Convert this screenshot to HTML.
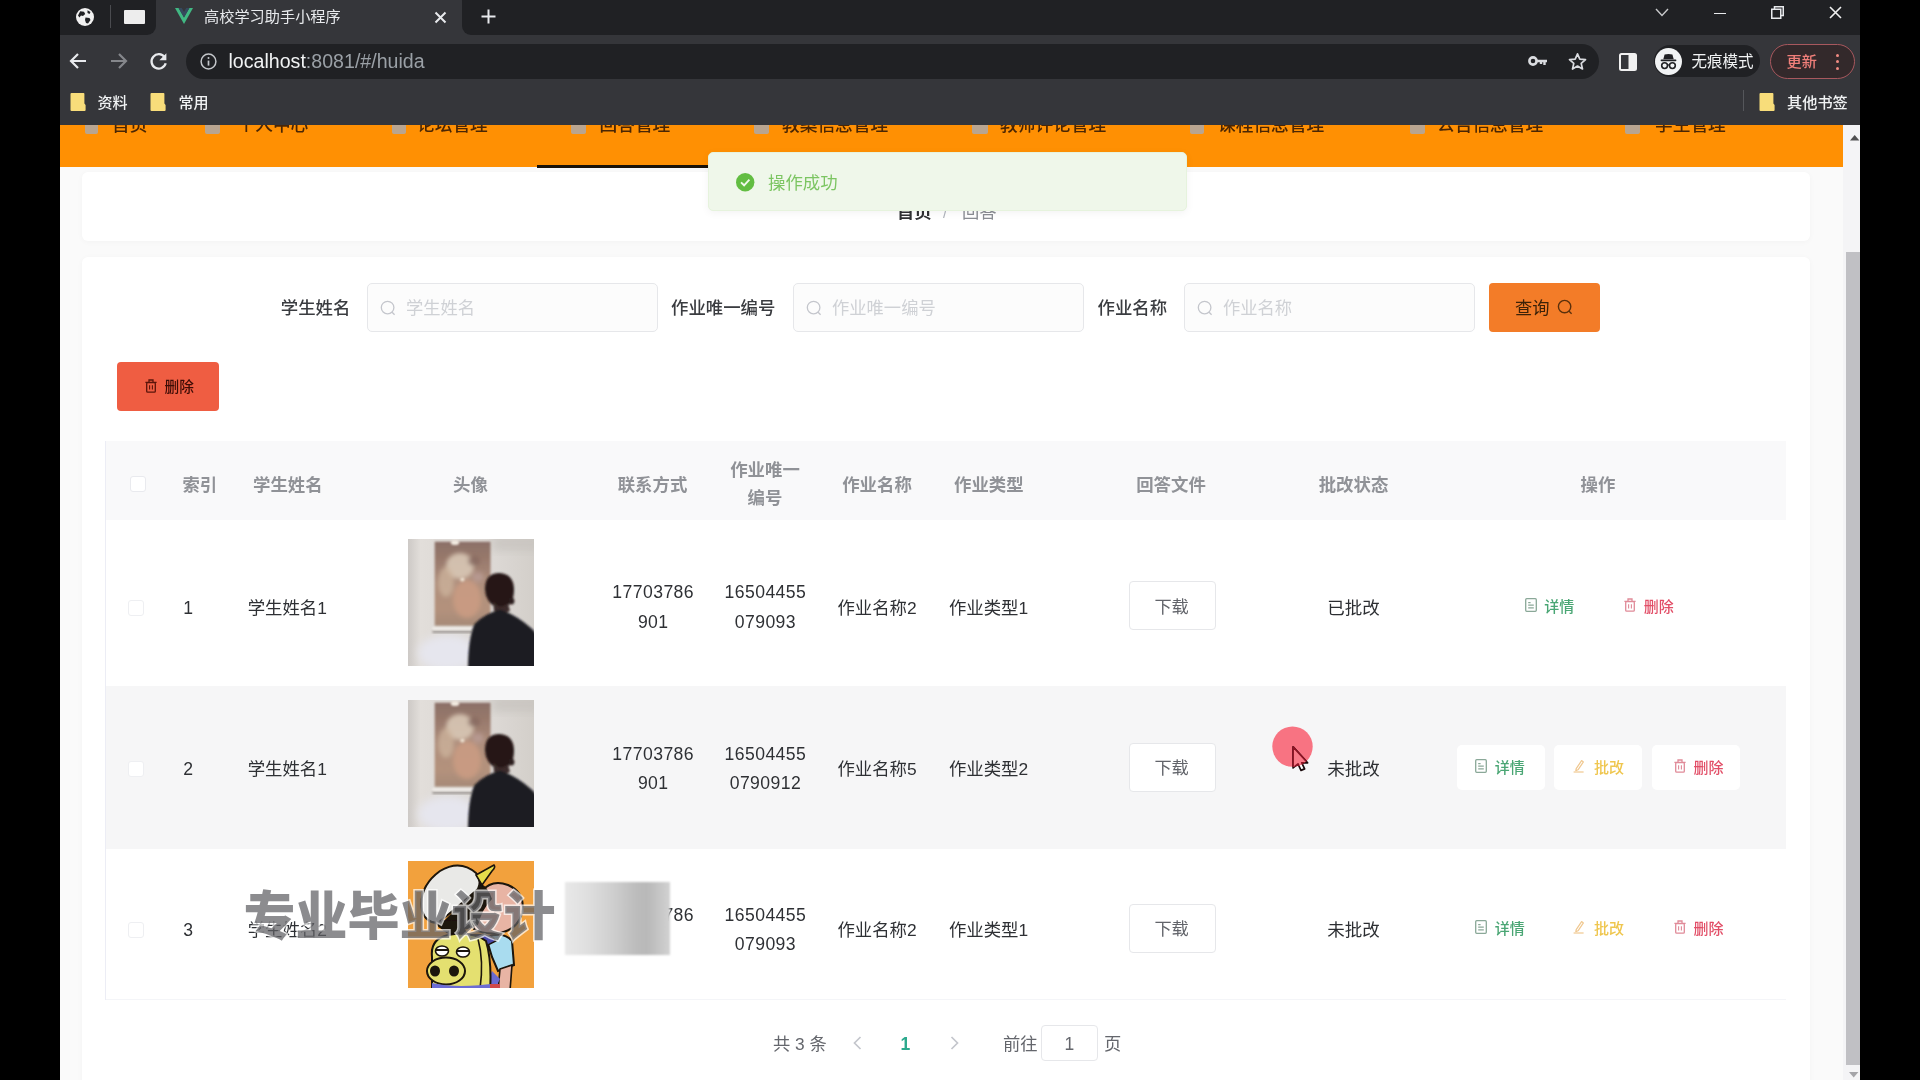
<!DOCTYPE html>
<html lang="zh-CN">
<head>
<meta charset="utf-8">
<title>高校学习助手小程序</title>
<style>
*{box-sizing:border-box;margin:0;padding:0}
html,body{width:1920px;height:1080px;overflow:hidden;background:#000}
body{font-family:"Liberation Sans","Noto Sans CJK SC",sans-serif;font-size:17.5px;color:#303133;position:relative}
#stage{position:absolute;left:60px;top:0;width:1800px;height:1080px;background:#fafafa;overflow:hidden}
.t{position:absolute;white-space:nowrap;line-height:1}
svg{overflow:visible}
#fx{position:absolute;left:-30px;top:-30px;width:1860px;height:1140px;background:#fafafa;filter:blur(.6px)}
#in{position:absolute;left:30px;top:30px;width:1800px;height:1080px}

</style>
</head>
<body>
<div id="stage">
<div id="fx">
<div id="in">
<div id="page" style="position:absolute;left:-30px;top:125px;width:1860px;height:985px;overflow:hidden">
<div style="position:absolute;left:30px;top:-125px;width:1800px;height:1080px">
<div style="position:absolute;left:22.0px;top:171.5px;width:1728.0px;height:69.0px;background:#fff;border-radius:6px;box-shadow:0 1px 6px rgba(0,0,0,.03);"></div>
<div style="position:absolute;left:22.0px;top:257.0px;width:1728.0px;height:900.0px;background:#fff;border-radius:6px;box-shadow:0 1px 6px rgba(0,0,0,.03);"></div>
<span class="t" style="left:837.0px;top:213.3px;font-size:17.3px;color:#303133;transform:translate(0,-50%);font-weight:700;">首页</span>
<span class="t" style="left:885.0px;top:212.1px;font-size:15px;color:#b0b4bc;transform:translate(-50%,-50%);">/</span>
<span class="t" style="left:902.0px;top:213.3px;font-size:17.3px;color:#8a8d93;transform:translate(0,-50%);">回答</span>
<div style="position:absolute;left:-30.0px;top:125.0px;width:1813.0px;height:42.0px;background:#ff9003;"></div>
<div style="position:absolute;left:477.0px;top:164.5px;width:171.0px;height:3.0px;background:#1a1208;"></div>
<span class="t" style="left:52.0px;top:126.1px;font-size:17.7px;color:#4a2604;transform:translate(0,-50%);font-weight:500;">首页</span>
<div style="position:absolute;left:25.0px;top:121.0px;width:13.0px;height:13.0px;background:rgba(168,170,180,.8);border-radius:2px;filter:blur(.6px);"></div>
<span class="t" style="left:177.5px;top:126.1px;font-size:17.7px;color:#4a2604;transform:translate(0,-50%);font-weight:500;">个人中心</span>
<div style="position:absolute;left:145.0px;top:121.0px;width:15.0px;height:13.0px;background:rgba(168,170,180,.8);border-radius:2px;filter:blur(.6px);"></div>
<span class="t" style="left:357.0px;top:126.1px;font-size:17.7px;color:#4a2604;transform:translate(0,-50%);font-weight:500;">论坛管理</span>
<div style="position:absolute;left:332.0px;top:121.0px;width:14.0px;height:13.0px;background:rgba(168,170,180,.8);border-radius:2px;filter:blur(.6px);"></div>
<span class="t" style="left:539.5px;top:126.1px;font-size:17.7px;color:#4a2604;transform:translate(0,-50%);font-weight:500;">回答管理</span>
<div style="position:absolute;left:511.0px;top:121.0px;width:15.0px;height:13.0px;background:rgba(168,170,180,.8);border-radius:2px;filter:blur(.6px);"></div>
<span class="t" style="left:722.0px;top:126.1px;font-size:17.7px;color:#4a2604;transform:translate(0,-50%);font-weight:500;">教案信息管理</span>
<div style="position:absolute;left:694.0px;top:121.0px;width:15.0px;height:13.0px;background:rgba(168,170,180,.8);border-radius:2px;filter:blur(.6px);"></div>
<span class="t" style="left:940.0px;top:126.1px;font-size:17.7px;color:#4a2604;transform:translate(0,-50%);font-weight:500;">教师评论管理</span>
<div style="position:absolute;left:912.0px;top:121.0px;width:16.0px;height:13.0px;background:rgba(168,170,180,.8);border-radius:2px;filter:blur(.6px);"></div>
<span class="t" style="left:1158.0px;top:126.1px;font-size:17.7px;color:#4a2604;transform:translate(0,-50%);font-weight:500;">课程信息管理</span>
<div style="position:absolute;left:1130.0px;top:121.0px;width:14.0px;height:13.0px;background:rgba(168,170,180,.8);border-radius:2px;filter:blur(.6px);"></div>
<span class="t" style="left:1377.0px;top:126.1px;font-size:17.7px;color:#4a2604;transform:translate(0,-50%);font-weight:500;">公告信息管理</span>
<div style="position:absolute;left:1350.0px;top:121.0px;width:15.0px;height:13.0px;background:rgba(168,170,180,.8);border-radius:2px;filter:blur(.6px);"></div>
<span class="t" style="left:1595.0px;top:126.1px;font-size:17.7px;color:#4a2604;transform:translate(0,-50%);font-weight:500;">学生管理</span>
<div style="position:absolute;left:1565.0px;top:121.0px;width:15.0px;height:13.0px;background:rgba(168,170,180,.8);border-radius:2px;filter:blur(.6px);"></div>
<div style="position:absolute;left:648.0px;top:151.5px;width:478.5px;height:59.0px;background:#eff7ea;border-radius:5px;border:1px solid #e6f3dd;box-shadow:0 2px 8px rgba(0,0,0,.05);z-index:5;"></div>
<svg style="position:absolute;left:675.5px;top:172.8px;z-index:6;" width="18.4" height="18.4" viewBox="0 0 18.4 18.4"><circle cx="9.2" cy="9.2" r="9.2" fill="#62bd42"/><path d="M5 9.4 L8.1 12.3 L13.4 6.6" fill="none" stroke="#f0f9eb" stroke-width="1.9"/></svg>
<span class="t" style="left:708.0px;top:183.8px;font-size:17.4px;color:#7cc562;transform:translate(0,-50%);z-index:6;">操作成功</span>
<span class="t" style="left:220.8px;top:309.1px;font-size:17.4px;color:#3a3c40;transform:translate(0,-50%);font-weight:500;">学生姓名</span>
<div style="position:absolute;left:307.0px;top:282.5px;width:291.0px;height:49.5px;background:#fcfcfc;border:1px solid #e6e7ea;border-radius:5px;"></div>
<svg style="position:absolute;left:319.3px;top:298.5px;" width="18" height="18" viewBox="0 0 18 18"><circle cx="8.6" cy="8.6" r="6.3" fill="none" stroke="#c4c6cc" stroke-width="1.3"/><path d="M13.1 13.3 L15.6 15.8" stroke="#c4c6cc" stroke-width="1.3"/></svg>
<span class="t" style="left:346.0px;top:309.3px;font-size:17.3px;color:#cfd1d5;transform:translate(0,-50%);">学生姓名</span>
<span class="t" style="left:611.0px;top:309.1px;font-size:17.4px;color:#3a3c40;transform:translate(0,-50%);font-weight:500;">作业唯一编号</span>
<div style="position:absolute;left:733.0px;top:282.5px;width:291.0px;height:49.5px;background:#fcfcfc;border:1px solid #e6e7ea;border-radius:5px;"></div>
<svg style="position:absolute;left:745.3px;top:298.5px;" width="18" height="18" viewBox="0 0 18 18"><circle cx="8.6" cy="8.6" r="6.3" fill="none" stroke="#c4c6cc" stroke-width="1.3"/><path d="M13.1 13.3 L15.6 15.8" stroke="#c4c6cc" stroke-width="1.3"/></svg>
<span class="t" style="left:772.0px;top:309.3px;font-size:17.3px;color:#cfd1d5;transform:translate(0,-50%);">作业唯一编号</span>
<span class="t" style="left:1037.5px;top:309.1px;font-size:17.4px;color:#3a3c40;transform:translate(0,-50%);font-weight:500;">作业名称</span>
<div style="position:absolute;left:1124.0px;top:282.5px;width:291.0px;height:49.5px;background:#fcfcfc;border:1px solid #e6e7ea;border-radius:5px;"></div>
<svg style="position:absolute;left:1136.3px;top:298.5px;" width="18" height="18" viewBox="0 0 18 18"><circle cx="8.6" cy="8.6" r="6.3" fill="none" stroke="#c4c6cc" stroke-width="1.3"/><path d="M13.1 13.3 L15.6 15.8" stroke="#c4c6cc" stroke-width="1.3"/></svg>
<span class="t" style="left:1163.0px;top:309.3px;font-size:17.3px;color:#cfd1d5;transform:translate(0,-50%);">作业名称</span>
<div style="position:absolute;left:1429.0px;top:283.0px;width:110.5px;height:48.5px;background:#f37c28;border-radius:4px;"></div>
<span class="t" style="left:1455.0px;top:309.1px;font-size:17.3px;color:#3c2208;transform:translate(0,-50%);">查询</span>
<svg style="position:absolute;left:1496.3px;top:298.2px;" width="18" height="18" viewBox="0 0 18 18"><circle cx="8.6" cy="8.6" r="6.2" fill="none" stroke="#5a300c" stroke-width="1.4"/><path d="M13.1 13.3 L15.6 15.8" stroke="#5a300c" stroke-width="1.4"/></svg>
<div style="position:absolute;left:56.5px;top:362.0px;width:102.5px;height:48.5px;background:#ef5d42;border-radius:4px;"></div>
<svg style="position:absolute;left:84.5px;top:379.0px;" width="12" height="14" viewBox="0 0 12 14"><path d="M0.4 3.4 H11.6 M4 3.2 V1 H8 V3.2" stroke="#5a140a" stroke-width="1.3" fill="none"/><rect x="1.7" y="3.6" width="8.6" height="9.6" rx="1" fill="none" stroke="#5a140a" stroke-width="1.3"/><path d="M4.6 6.2 V10.6 M7.4 6.2 V10.6" stroke="#5a140a" stroke-width="1.1"/></svg>
<span class="t" style="left:104.5px;top:386.6px;font-size:14.7px;color:#3c0c06;transform:translate(0,-50%);font-weight:500;">删除</span>
<div style="position:absolute;left:45.5px;top:441.0px;width:1680.0px;height:78.5px;background:#f9f9fa;"></div>
<div style="position:absolute;left:45.5px;top:686.0px;width:1680.0px;height:163.0px;background:#f6f6f7;"></div>
<div style="position:absolute;left:44.6px;top:441.0px;width:1.4px;height:558.5px;background:#ecedf5;"></div>
<div style="position:absolute;left:45.5px;top:999.0px;width:1680.0px;height:1.0px;background:#f4f5f8;"></div>
<div style="position:absolute;left:70.0px;top:476.0px;width:16.0px;height:16.0px;background:#fff;border:1px solid #e9eaee;border-radius:3px;"></div>
<span class="t" style="left:122.5px;top:485.8px;font-size:17.3px;color:#909297;transform:translate(0,-50%);font-weight:700;">索引</span>
<span class="t" style="left:227.8px;top:485.8px;font-size:17.4px;color:#909297;transform:translate(-50%,-50%);font-weight:700;">学生姓名</span>
<span class="t" style="left:410.5px;top:485.8px;font-size:17.4px;color:#909297;transform:translate(-50%,-50%);font-weight:700;">头像</span>
<span class="t" style="left:592.5px;top:485.8px;font-size:17.4px;color:#909297;transform:translate(-50%,-50%);font-weight:700;">联系方式</span>
<span class="t" style="left:817.0px;top:485.8px;font-size:17.4px;color:#909297;transform:translate(-50%,-50%);font-weight:700;">作业名称</span>
<span class="t" style="left:928.8px;top:485.8px;font-size:17.4px;color:#909297;transform:translate(-50%,-50%);font-weight:700;">作业类型</span>
<span class="t" style="left:1111.0px;top:485.8px;font-size:17.4px;color:#909297;transform:translate(-50%,-50%);font-weight:700;">回答文件</span>
<span class="t" style="left:1293.5px;top:485.8px;font-size:17.4px;color:#909297;transform:translate(-50%,-50%);font-weight:700;">批改状态</span>
<span class="t" style="left:1538.0px;top:485.8px;font-size:17.4px;color:#909297;transform:translate(-50%,-50%);font-weight:700;">操作</span>
<div class="w" style="position:absolute;left:669.0px;top:455.9px;width:72px;font-size:17.4px;line-height:28.5px;color:#909297;text-align:center;word-break:break-all;white-space:normal;font-weight:700;">作业唯一编号</div>
<div style="position:absolute;left:67.5px;top:599.7px;width:16.0px;height:16.0px;background:#fff;border:1px solid #eeeff2;border-radius:3px;"></div>
<span class="t" style="left:123.3px;top:609.1px;font-size:17.6px;color:#2e3034;transform:translate(0,-50%);">1</span>
<span class="t" style="left:227.3px;top:609.1px;font-size:17.4px;color:#2e3034;transform:translate(-50%,-50%);">学生姓名1</span>
<div class="w" style="position:absolute;left:550.2px;top:578.4px;width:86px;font-size:17.6px;line-height:29.4px;color:#2e3034;text-align:center;word-break:break-all;white-space:normal;letter-spacing:0.42px;">17703786901</div>
<div class="w" style="position:absolute;left:662.4px;top:578.4px;width:86px;font-size:17.6px;line-height:29.4px;color:#2e3034;text-align:center;word-break:break-all;white-space:normal;letter-spacing:0.42px;">16504455079093</div>
<span class="t" style="left:817.0px;top:609.1px;font-size:17.4px;color:#2e3034;transform:translate(-50%,-50%);">作业名称2</span>
<span class="t" style="left:928.5px;top:609.1px;font-size:17.4px;color:#2e3034;transform:translate(-50%,-50%);">作业类型1</span>
<div style="position:absolute;left:1068.5px;top:581.3px;width:87.0px;height:49.0px;background:#fff;border:1px solid #e6e7ea;border-radius:4px;"></div>
<span class="t" style="left:1111.6px;top:607.8px;font-size:17.2px;color:#62646a;transform:translate(-50%,-50%);">下载</span>
<span class="t" style="left:1293.5px;top:609.1px;font-size:17.5px;color:#2c2e32;transform:translate(-50%,-50%);">已批改</span>
<svg style="position:absolute;left:1465.0px;top:597.9px;" width="12" height="14" viewBox="0 0 12 14"><rect x="0.7" y="0.7" width="10.6" height="12.6" rx="1" fill="none" stroke="#8aa898" stroke-width="1.3"/><path d="M3.2 4.6 H5.6 M3.2 7.2 H8.8 M3.2 9.8 H8.8" stroke="#8aa898" stroke-width="1.2"/></svg>
<span class="t" style="left:1484.3px;top:605.5px;font-size:15px;color:#4aa674;transform:translate(0,-50%);font-weight:500;">详情</span>
<svg style="position:absolute;left:1563.8px;top:597.9px;" width="12" height="14" viewBox="0 0 12 14"><path d="M0.4 3.4 H11.6 M4 3.2 V1 H8 V3.2" stroke="#e08a98" stroke-width="1.3" fill="none"/><rect x="1.7" y="3.6" width="8.6" height="9.6" rx="1" fill="none" stroke="#e08a98" stroke-width="1.3"/><path d="M4.6 6.2 V10.6 M7.4 6.2 V10.6" stroke="#e08a98" stroke-width="1.1"/></svg>
<span class="t" style="left:1583.8px;top:605.5px;font-size:15px;color:#e24e67;transform:translate(0,-50%);font-weight:500;">删除</span>
<div style="position:absolute;left:67.5px;top:760.9px;width:16.0px;height:16.0px;background:#fff;border:1px solid #eeeff2;border-radius:3px;"></div>
<span class="t" style="left:123.3px;top:770.3px;font-size:17.6px;color:#2e3034;transform:translate(0,-50%);">2</span>
<span class="t" style="left:227.3px;top:770.3px;font-size:17.4px;color:#2e3034;transform:translate(-50%,-50%);">学生姓名1</span>
<div class="w" style="position:absolute;left:550.2px;top:739.6px;width:86px;font-size:17.6px;line-height:29.4px;color:#2e3034;text-align:center;word-break:break-all;white-space:normal;letter-spacing:0.42px;">17703786901</div>
<div class="w" style="position:absolute;left:662.4px;top:739.6px;width:86px;font-size:17.6px;line-height:29.4px;color:#2e3034;text-align:center;word-break:break-all;white-space:normal;letter-spacing:0.42px;">165044550790912</div>
<span class="t" style="left:817.0px;top:770.3px;font-size:17.4px;color:#2e3034;transform:translate(-50%,-50%);">作业名称5</span>
<span class="t" style="left:928.5px;top:770.3px;font-size:17.4px;color:#2e3034;transform:translate(-50%,-50%);">作业类型2</span>
<div style="position:absolute;left:1068.5px;top:742.5px;width:87.0px;height:49.0px;background:#fff;border:1px solid #e6e7ea;border-radius:4px;"></div>
<span class="t" style="left:1111.6px;top:769.0px;font-size:17.2px;color:#62646a;transform:translate(-50%,-50%);">下载</span>
<span class="t" style="left:1293.5px;top:770.3px;font-size:17.5px;color:#2c2e32;transform:translate(-50%,-50%);">未批改</span>
<div style="position:absolute;left:1396.5px;top:744.5px;width:88.0px;height:45.0px;background:#fff;border-radius:5px;"></div>
<div style="position:absolute;left:1493.5px;top:744.5px;width:88.0px;height:45.0px;background:#fff;border-radius:5px;"></div>
<div style="position:absolute;left:1591.5px;top:744.5px;width:88.0px;height:45.0px;background:#fff;border-radius:5px;"></div>
<svg style="position:absolute;left:1414.5px;top:759.1px;" width="12" height="14" viewBox="0 0 12 14"><rect x="0.7" y="0.7" width="10.6" height="12.6" rx="1" fill="none" stroke="#8aa898" stroke-width="1.3"/><path d="M3.2 4.6 H5.6 M3.2 7.2 H8.8 M3.2 9.8 H8.8" stroke="#8aa898" stroke-width="1.2"/></svg>
<span class="t" style="left:1434.8px;top:766.7px;font-size:15px;color:#4aa674;transform:translate(0,-50%);font-weight:500;">详情</span>
<svg style="position:absolute;left:1513.0px;top:759.1px;" width="12" height="14" viewBox="0 0 12 14"><path d="M3.2 9.6 L8.6 1.6 L10.4 2.9 L5 10.8 L2.8 11.6 Z" fill="none" stroke="#f0c890" stroke-width="1.2" stroke-linejoin="round"/><path d="M0.6 13 H10.6" stroke="#f0c890" stroke-width="1.2"/></svg>
<span class="t" style="left:1534.0px;top:766.7px;font-size:15px;color:#efc64e;transform:translate(0,-50%);font-weight:500;">批改</span>
<svg style="position:absolute;left:1613.5px;top:759.1px;" width="12" height="14" viewBox="0 0 12 14"><path d="M0.4 3.4 H11.6 M4 3.2 V1 H8 V3.2" stroke="#e08a98" stroke-width="1.3" fill="none"/><rect x="1.7" y="3.6" width="8.6" height="9.6" rx="1" fill="none" stroke="#e08a98" stroke-width="1.3"/><path d="M4.6 6.2 V10.6 M7.4 6.2 V10.6" stroke="#e08a98" stroke-width="1.1"/></svg>
<span class="t" style="left:1633.5px;top:766.7px;font-size:15px;color:#e24e67;transform:translate(0,-50%);font-weight:500;">删除</span>
<div style="position:absolute;left:67.5px;top:921.9px;width:16.0px;height:16.0px;background:#fff;border:1px solid #eeeff2;border-radius:3px;"></div>
<span class="t" style="left:123.3px;top:931.3px;font-size:17.6px;color:#2e3034;transform:translate(0,-50%);">3</span>
<span class="t" style="left:227.3px;top:931.3px;font-size:17.4px;color:#2e3034;transform:translate(-50%,-50%);">学生姓名2</span>
<div class="w" style="position:absolute;left:550.2px;top:900.6px;width:86px;font-size:17.6px;line-height:29.4px;color:#2e3034;text-align:center;word-break:break-all;white-space:normal;letter-spacing:0.42px;">17703786901</div>
<div class="w" style="position:absolute;left:662.4px;top:900.6px;width:86px;font-size:17.6px;line-height:29.4px;color:#2e3034;text-align:center;word-break:break-all;white-space:normal;letter-spacing:0.42px;">16504455079093</div>
<span class="t" style="left:817.0px;top:931.3px;font-size:17.4px;color:#2e3034;transform:translate(-50%,-50%);">作业名称2</span>
<span class="t" style="left:928.5px;top:931.3px;font-size:17.4px;color:#2e3034;transform:translate(-50%,-50%);">作业类型1</span>
<div style="position:absolute;left:1068.5px;top:903.5px;width:87.0px;height:49.0px;background:#fff;border:1px solid #e6e7ea;border-radius:4px;"></div>
<span class="t" style="left:1111.6px;top:930.0px;font-size:17.2px;color:#62646a;transform:translate(-50%,-50%);">下载</span>
<span class="t" style="left:1293.5px;top:931.3px;font-size:17.5px;color:#2c2e32;transform:translate(-50%,-50%);">未批改</span>
<svg style="position:absolute;left:1414.5px;top:920.1px;" width="12" height="14" viewBox="0 0 12 14"><rect x="0.7" y="0.7" width="10.6" height="12.6" rx="1" fill="none" stroke="#8aa898" stroke-width="1.3"/><path d="M3.2 4.6 H5.6 M3.2 7.2 H8.8 M3.2 9.8 H8.8" stroke="#8aa898" stroke-width="1.2"/></svg>
<span class="t" style="left:1434.8px;top:927.7px;font-size:15px;color:#4aa674;transform:translate(0,-50%);font-weight:500;">详情</span>
<svg style="position:absolute;left:1513.0px;top:920.1px;" width="12" height="14" viewBox="0 0 12 14"><path d="M3.2 9.6 L8.6 1.6 L10.4 2.9 L5 10.8 L2.8 11.6 Z" fill="none" stroke="#f0c890" stroke-width="1.2" stroke-linejoin="round"/><path d="M0.6 13 H10.6" stroke="#f0c890" stroke-width="1.2"/></svg>
<span class="t" style="left:1534.0px;top:927.7px;font-size:15px;color:#efc64e;transform:translate(0,-50%);font-weight:500;">批改</span>
<svg style="position:absolute;left:1613.5px;top:920.1px;" width="12" height="14" viewBox="0 0 12 14"><path d="M0.4 3.4 H11.6 M4 3.2 V1 H8 V3.2" stroke="#e08a98" stroke-width="1.3" fill="none"/><rect x="1.7" y="3.6" width="8.6" height="9.6" rx="1" fill="none" stroke="#e08a98" stroke-width="1.3"/><path d="M4.6 6.2 V10.6 M7.4 6.2 V10.6" stroke="#e08a98" stroke-width="1.1"/></svg>
<span class="t" style="left:1633.5px;top:927.7px;font-size:15px;color:#e24e67;transform:translate(0,-50%);font-weight:500;">删除</span>
<svg style="position:absolute;left:348.0px;top:539.0px;" width="126" height="127" viewBox="0 0 126 127"><defs><filter id="p1a" x="-10%" y="-10%" width="120%" height="120%"><feGaussianBlur stdDeviation="1"/></filter><filter id="p1b" x="-30%" y="-30%" width="160%" height="160%"><feGaussianBlur stdDeviation="4"/></filter><filter id="p1c" x="-30%" y="-30%" width="160%" height="160%"><feGaussianBlur stdDeviation="2.2"/></filter><linearGradient id="p1w" x1="0" y1="0" x2="1" y2="0"><stop offset="0" stop-color="#cdc9c6"/><stop offset=".1" stop-color="#e2deda"/><stop offset=".2" stop-color="#e0dcd8"/><stop offset=".7" stop-color="#dcd8d4"/><stop offset="1" stop-color="#d3cfca"/></linearGradient><linearGradient id="p1t" x1="0" y1="0" x2="0" y2="1"><stop offset="0" stop-color="#8b7067"/><stop offset=".2" stop-color="#98796c"/><stop offset=".5" stop-color="#ae8e7c"/><stop offset=".8" stop-color="#b4927c"/><stop offset="1" stop-color="#a68a78"/></linearGradient><clipPath id="p1k"><rect x="0" y="0" width="126" height="127"/></clipPath><clipPath id="p1q"><rect x="26.7" y="2.7" width="55.8" height="84"/></clipPath></defs><g clip-path="url(#p1k)"><rect width="126" height="127" fill="url(#p1w)"/><rect x="84" y="-4" width="50" height="16" fill="#c6c2be" opacity=".7" filter="url(#p1b)"/><ellipse cx="40" cy="114" rx="30" ry="18" fill="#e6e6ee" filter="url(#p1b)"/><rect x="24.4" y="91" width="39.5" height="3.4" fill="#aaa5a1" filter="url(#p1a)"/><rect x="24.4" y="88" width="39.5" height="3.2" fill="#efebe7" filter="url(#p1a)"/><g filter="url(#p1a)"><rect x="26.7" y="2.7" width="55.8" height="84" fill="url(#p1t)"/></g><g clip-path="url(#p1q)"><g filter="url(#p1c)"><ellipse cx="52" cy="27" rx="14" ry="13" fill="#dccbb9" opacity=".85"/><ellipse cx="38" cy="43" rx="8" ry="15" fill="#cdb49c" opacity=".75"/><ellipse cx="59" cy="60" rx="14" ry="19" fill="#cb9c82" opacity=".85"/><ellipse cx="66" cy="22" rx="6" ry="5" fill="#86685f" opacity=".8"/><ellipse cx="70" cy="38" rx="6" ry="5" fill="#c0a4a0" opacity=".6"/></g></g><g filter="url(#p1a)"><ellipse cx="47" cy="3.4" rx="4.2" ry="2.6" fill="#f2eae0"/><circle cx="54.4" cy="40.5" r="2" fill="#efe2d2"/></g><g filter="url(#p1a)"><path d="M77 50 Q77 34 91.5 34 Q106 35 106 51 Q106 60 102 65 Q97 69 91 68 Q84 68 80 61 Q77 56 77 50 Z" fill="#251919"/><ellipse cx="103.4" cy="62" rx="3" ry="3.6" fill="#2a1c1c"/><path d="M85 62 Q92 72 100 64 L102 72 Q94 76 86 72 Z" fill="#3b2b29"/><path d="M60 130 Q60 100 66.5 85 Q76 75 92 70.5 Q108 76 123 89 Q128 93 130 99 L130 130 Z" fill="#1b1b24"/></g></g></svg>
<svg style="position:absolute;left:348.0px;top:700.0px;" width="126" height="127" viewBox="0 0 126 127"><defs><filter id="p2a" x="-10%" y="-10%" width="120%" height="120%"><feGaussianBlur stdDeviation="1"/></filter><filter id="p2b" x="-30%" y="-30%" width="160%" height="160%"><feGaussianBlur stdDeviation="4"/></filter><filter id="p2c" x="-30%" y="-30%" width="160%" height="160%"><feGaussianBlur stdDeviation="2.2"/></filter><linearGradient id="p2w" x1="0" y1="0" x2="1" y2="0"><stop offset="0" stop-color="#cdc9c6"/><stop offset=".1" stop-color="#e2deda"/><stop offset=".2" stop-color="#e0dcd8"/><stop offset=".7" stop-color="#dcd8d4"/><stop offset="1" stop-color="#d3cfca"/></linearGradient><linearGradient id="p2t" x1="0" y1="0" x2="0" y2="1"><stop offset="0" stop-color="#8b7067"/><stop offset=".2" stop-color="#98796c"/><stop offset=".5" stop-color="#ae8e7c"/><stop offset=".8" stop-color="#b4927c"/><stop offset="1" stop-color="#a68a78"/></linearGradient><clipPath id="p2k"><rect x="0" y="0" width="126" height="127"/></clipPath><clipPath id="p2q"><rect x="26.7" y="2.7" width="55.8" height="84"/></clipPath></defs><g clip-path="url(#p2k)"><rect width="126" height="127" fill="url(#p2w)"/><rect x="84" y="-4" width="50" height="16" fill="#c6c2be" opacity=".7" filter="url(#p2b)"/><ellipse cx="40" cy="114" rx="30" ry="18" fill="#e6e6ee" filter="url(#p2b)"/><rect x="24.4" y="91" width="39.5" height="3.4" fill="#aaa5a1" filter="url(#p2a)"/><rect x="24.4" y="88" width="39.5" height="3.2" fill="#efebe7" filter="url(#p2a)"/><g filter="url(#p2a)"><rect x="26.7" y="2.7" width="55.8" height="84" fill="url(#p2t)"/></g><g clip-path="url(#p2q)"><g filter="url(#p2c)"><ellipse cx="52" cy="27" rx="14" ry="13" fill="#dccbb9" opacity=".85"/><ellipse cx="38" cy="43" rx="8" ry="15" fill="#cdb49c" opacity=".75"/><ellipse cx="59" cy="60" rx="14" ry="19" fill="#cb9c82" opacity=".85"/><ellipse cx="66" cy="22" rx="6" ry="5" fill="#86685f" opacity=".8"/><ellipse cx="70" cy="38" rx="6" ry="5" fill="#c0a4a0" opacity=".6"/></g></g><g filter="url(#p2a)"><ellipse cx="47" cy="3.4" rx="4.2" ry="2.6" fill="#f2eae0"/><circle cx="54.4" cy="40.5" r="2" fill="#efe2d2"/></g><g filter="url(#p2a)"><path d="M77 50 Q77 34 91.5 34 Q106 35 106 51 Q106 60 102 65 Q97 69 91 68 Q84 68 80 61 Q77 56 77 50 Z" fill="#251919"/><ellipse cx="103.4" cy="62" rx="3" ry="3.6" fill="#2a1c1c"/><path d="M85 62 Q92 72 100 64 L102 72 Q94 76 86 72 Z" fill="#3b2b29"/><path d="M60 130 Q60 100 66.5 85 Q76 75 92 70.5 Q108 76 123 89 Q128 93 130 99 L130 130 Z" fill="#1b1b24"/></g></g></svg>
<svg style="position:absolute;left:348.0px;top:861.0px;" width="126" height="127" viewBox="0 0 126 127"><defs><clipPath id="cc"><rect x="0" y="0" width="126" height="127"/></clipPath><filter id="bl0" x="-10%" y="-10%" width="120%" height="120%"><feGaussianBlur stdDeviation=".6"/></filter></defs><g clip-path="url(#cc)" filter="url(#bl0)"><rect width="126" height="127" fill="#f2a13c"/><path d="M74 30 Q84 18 100 24 Q118 32 114 52 Q110 68 92 72 Q76 74 66 68 Q58 50 74 30 Z" fill="#e8b4a4" stroke="#1a1208" stroke-width="2"/><path d="M30 66 Q50 74 70 64 Q74 48 84 38 Q80 26 72 22 Q56 40 30 66 Z" fill="#1a1208"/><path d="M24 58 Q40 80 62 76 Q56 66 50 60 Z" fill="#1a1208"/><path d="M14 50 Q10 26 32 10 Q52 -2 68 12 Q74 20 70 28 Q50 46 30 62 Q18 62 14 50 Z" fill="#e9e9e7" stroke="#1a1208" stroke-width="2"/><path d="M68 14 L86 4 Q88 6 84 10 L74 24 Z" fill="#e6dc4c" stroke="#1a1208" stroke-width="1.6"/><path d="M78 76 Q96 70 104 80 L106 104 L90 110 L84 96 Z" fill="#a9dcef" stroke="#1a1208" stroke-width="2"/><path d="M92 108 L104 104 L102 130 L90 130 Z" fill="#e8b4a4" stroke="#1a1208" stroke-width="1.6"/><path d="M64 74 Q84 72 88 80 L80 84 Z" fill="#4848a8" stroke="#1a1208" stroke-width="1.4"/><path d="M84 110 L92 118 L86 130 L78 124 Z" fill="#6a6ad0"/><path d="M24 96 Q22 78 40 74 Q64 70 78 80 Q84 100 82 130 L24 130 Z" fill="#e4e070" stroke="#1a1208" stroke-width="2"/><path d="M70 78 Q76 100 72 128" fill="none" stroke="#1a1208" stroke-width="1.6"/><ellipse cx="34" cy="90" rx="6.5" ry="5" fill="#fff" stroke="#1a1208" stroke-width="1.6"/><ellipse cx="55" cy="91" rx="6.5" ry="5" fill="#fff" stroke="#1a1208" stroke-width="1.6"/><path d="M28 89 H40 M49 90 H61" stroke="#1a1208" stroke-width="2.2"/><ellipse cx="38" cy="110" rx="19" ry="13.5" fill="#e4e070" stroke="#1a1208" stroke-width="2"/><ellipse cx="27" cy="110" rx="5" ry="5.6" fill="#1a1208"/><ellipse cx="46" cy="110" rx="5" ry="5.6" fill="#1a1208"/><path d="M24 122 Q50 128 90 122 L90 130 L24 130 Z" fill="#6c6cd4"/><rect x="82" y="123" width="10" height="6" fill="#d04848"/></g></svg>
<div style="position:absolute;left:505.0px;top:882.0px;width:105.0px;height:73.0px;background:linear-gradient(90deg,#e8e8e8 0%,#e0e0e0 20%,#cfcfcf 45%,#bcbcbc 68%,#b9b9b9 78%,#c8c8c8 92%,#d2d2d2 100%);filter:blur(.8px);"></div>
<span class="t" style="left:183.5px;top:917.3px;font-size:52px;color:rgba(96,96,100,.72);transform:translate(0,-50%);font-weight:900;-webkit-text-stroke:3px rgba(255,255,255,.7);paint-order:stroke fill;letter-spacing:0px;">专业毕业设计</span>
<span class="t" style="left:713.0px;top:1045.1px;font-size:17.3px;color:#64666c;transform:translate(0,-50%);">共 3 条</span>
<svg style="position:absolute;left:792.5px;top:1036.0px;" width="9" height="14" viewBox="0 0 9 14"><path d="M7.5 1 L1.5 7 L7.5 13" fill="none" stroke="#c4c6cc" stroke-width="1.7"/></svg>
<span class="t" style="left:845.3px;top:1045.1px;font-size:17.5px;color:#2ba98d;transform:translate(-50%,-50%);font-weight:700;">1</span>
<svg style="position:absolute;left:890.0px;top:1036.0px;" width="9" height="14" viewBox="0 0 9 14"><path d="M1.5 1 L7.5 7 L1.5 13" fill="none" stroke="#c4c6cc" stroke-width="1.7"/></svg>
<span class="t" style="left:943.0px;top:1045.1px;font-size:17.3px;color:#64666c;transform:translate(0,-50%);">前往</span>
<div style="position:absolute;left:981.0px;top:1025.0px;width:57.0px;height:35.5px;background:#fff;border:1px solid #e6e7ea;border-radius:4px;"></div>
<span class="t" style="left:1009.3px;top:1045.1px;font-size:17.5px;color:#64666c;transform:translate(-50%,-50%);">1</span>
<span class="t" style="left:1044.0px;top:1045.1px;font-size:17.3px;color:#64666c;transform:translate(0,-50%);">页</span>
<svg style="position:absolute;left:1210.0px;top:724.0px;" width="50" height="52" viewBox="0 0 50 52"><defs><clipPath id="cur"><circle cx="22.5" cy="22.6" r="20.2"/></clipPath></defs><circle cx="22.5" cy="22.6" r="20.2" fill="#f87382"/><path d="M23.1 22.9 V43.9 L28 39.9 L31 46.4 L34.6 44.9 L31.8 38.8 H37.6 Z" fill="#fff" stroke="#1a0a0c" stroke-width="1.7" stroke-linejoin="round"/><g clip-path="url(#cur)"><path d="M23.1 22.9 V43.9 L28 39.9 L31 46.4 L34.6 44.9 L31.8 38.8 H37.6 Z" fill="#f97a88" stroke="#8e1424" stroke-width="1.7" stroke-linejoin="round"/></g></svg>
<div style="position:absolute;left:1783.0px;top:125.0px;width:47.0px;height:985.0px;background:#f4f4f6;"></div>
<div style="position:absolute;left:1786.3px;top:251.5px;width:43.7px;height:813.0px;background:#c0c0c4;"></div>
<svg style="position:absolute;left:1789.6px;top:134.6px;" width="9.4" height="5.6" viewBox="0 0 9.4 5.6"><path d="M0 5.6 L4.7 0 L9.4 5.6 Z" fill="#505052"/></svg>
<svg style="position:absolute;left:1789.3px;top:1072.0px;" width="9.4" height="5.6" viewBox="0 0 9.4 5.6"><path d="M0 0 L4.7 5.6 L9.4 0 Z" fill="#a4a4a8"/></svg>
</div></div>
<div id="chrome" style="position:absolute;left:0;top:0;width:1800px;height:125px;z-index:50">
<div style="position:absolute;left:-30.0px;top:-30.0px;width:1860.0px;height:155.0px;background:#35363a;"></div>
<div style="position:absolute;left:-30.0px;top:-30.0px;width:1860.0px;height:65.0px;background:#202124;"></div>
<div style="position:absolute;left:96.0px;top:-8.0px;width:306.0px;height:43.0px;background:#35363a;border-radius:9px 9px 0 0;"></div>
<div style="position:absolute;left:87.0px;top:26.0px;width:9.0px;height:9.0px;background:#35363a;"><div style="width:9px;height:9px;background:#202124;border-radius:0 0 9px 0"></div></div>
<div style="position:absolute;left:402.0px;top:26.0px;width:9.0px;height:9.0px;background:#35363a;"><div style="width:9px;height:9px;background:#202124;border-radius:0 0 0 9px"></div></div>
<svg style="position:absolute;left:15.0px;top:6.5px;" width="20" height="20" viewBox="0 0 20 20"><circle cx="10" cy="10" r="9" fill="#f1f1f1"/><path d="M5.2 4.2 L9 4.8 L10.2 7 L8 9 L6 8.4 L4.4 10.4 L3 8.4 Z M10.5 10.5 L14.5 11 L15.5 13 L13 16.5 L11 16 L10 13 Z M12.5 3.2 L15.5 5 L14.5 7 L12.5 6 Z" fill="#202124"/></svg>
<div style="position:absolute;left:49.5px;top:5.0px;width:1.0px;height:23.0px;background:#4a4b4f;"></div>
<div style="position:absolute;left:64.0px;top:9.5px;width:21.0px;height:14.0px;background:#ededed;border-radius:1px;"></div>
<svg style="position:absolute;left:114.5px;top:8.0px;" width="18" height="17" viewBox="0 0 18 17"><path d="M0 0 L3.6 0 L9 9.6 L14.4 0 L18 0 L9 16 Z" fill="#41b883"/><path d="M3.6 0 L6.8 0 L9 4 L11.2 0 L14.4 0 L9 9.6 Z" fill="#35495e"/></svg>
<span class="t" style="left:144.0px;top:17.2px;font-size:15.2px;color:#e8eaed;transform:translate(0,-50%);">高校学习助手小程序</span>
<svg style="position:absolute;left:374.0px;top:10.5px;" width="13" height="13" viewBox="0 0 13 13"><path d="M1.5 1.5 L11.5 11.5 M11.5 1.5 L1.5 11.5" stroke="#e8eaed" stroke-width="2" fill="none"/></svg>
<svg style="position:absolute;left:421.0px;top:9.0px;" width="15" height="15" viewBox="0 0 15 15"><path d="M7.5 0.5 V14.5 M0.5 7.5 H14.5" stroke="#e8eaed" stroke-width="2" fill="none"/></svg>
<svg style="position:absolute;left:1595.0px;top:8.0px;" width="14" height="9" viewBox="0 0 14 9"><path d="M1 1 L7 7.5 L13 1" stroke="#c8c9cb" stroke-width="1.4" fill="none"/></svg>
<div style="position:absolute;left:1654.0px;top:12.5px;width:12.0px;height:1.5px;background:#e8eaed;"></div>
<svg style="position:absolute;left:1711.0px;top:6.0px;" width="13" height="13" viewBox="0 0 13 13"><rect x="0.75" y="3.25" width="9" height="9" fill="none" stroke="#e8eaed" stroke-width="1.5"/><path d="M3.5 3 V0.75 H12.25 V9.5 H10" fill="none" stroke="#e8eaed" stroke-width="1.5"/></svg>
<svg style="position:absolute;left:1769.0px;top:6.0px;" width="13" height="13" viewBox="0 0 13 13"><path d="M1 1 L12 12 M12 1 L1 12" stroke="#f1f1f1" stroke-width="1.6" fill="none"/></svg>
<svg style="position:absolute;left:9.0px;top:52.0px;" width="18" height="18" viewBox="0 0 18 18"><path d="M17 9 H2.5 M9 2 L2 9 L9 16" stroke="#e8eaed" stroke-width="2.2" fill="none"/></svg>
<svg style="position:absolute;left:49.5px;top:52.0px;" width="18" height="18" viewBox="0 0 18 18"><path d="M1 9 H15.5 M9 2 L16 9 L9 16" stroke="#85878b" stroke-width="2.2" fill="none"/></svg>
<svg style="position:absolute;left:89.0px;top:51.5px;" width="19" height="19" viewBox="0 0 19 19"><path d="M15.6 5.2 A7.2 7.2 0 1 0 16.7 11.3" stroke="#e8eaed" stroke-width="2.3" fill="none"/><path d="M17.4 1.2 V8.2 H10.4 Z" fill="#e8eaed"/></svg>
<div style="position:absolute;left:126.0px;top:43.5px;width:1413.0px;height:35.5px;background:#202124;border-radius:18px;"></div>
<svg style="position:absolute;left:140.0px;top:52.5px;" width="17" height="17" viewBox="0 0 17 17"><circle cx="8.5" cy="8.5" r="7.4" fill="none" stroke="#c4c7cb" stroke-width="1.5"/><path d="M8.5 7.6 V12.6" stroke="#c4c7cb" stroke-width="1.7"/><circle cx="8.5" cy="5.1" r="1" fill="#c4c7cb"/></svg>
<span class="t" style="left:168.5px;top:62.3px;font-size:19.6px;color:#f1f3f4;transform:translate(0,-50%);"><span style="color:#f1f3f4">localhost</span><span style="color:#9aa0a6">:8081/#/huida</span></span>
<svg style="position:absolute;left:1468.0px;top:55.0px;" width="20" height="12" viewBox="0 0 20 12"><circle cx="5" cy="6" r="3.6" fill="none" stroke="#dadce0" stroke-width="2.6"/><path d="M8.5 6 H19 M16.5 6 V10 M13 6 V9" stroke="#dadce0" stroke-width="2.4" fill="none"/></svg>
<svg style="position:absolute;left:1508.0px;top:51.5px;" width="19" height="19" viewBox="0 0 19 19"><path d="M9.5 1.8 L11.8 7.1 L17.5 7.6 L13.2 11.4 L14.5 17 L9.5 14 L4.5 17 L5.8 11.4 L1.5 7.6 L7.2 7.1 Z" fill="none" stroke="#dadce0" stroke-width="1.7" stroke-linejoin="round"/></svg>
<svg style="position:absolute;left:1559.0px;top:52.5px;" width="18" height="18" viewBox="0 0 18 18"><rect x="1" y="1" width="16" height="16" rx="1.5" fill="none" stroke="#f1f1f1" stroke-width="2"/><rect x="9.5" y="1" width="7.5" height="16" fill="#f1f1f1"/></svg>
<div style="position:absolute;left:1594.0px;top:45.0px;width:106.0px;height:32.0px;background:#202124;border-radius:16px;"></div>
<svg style="position:absolute;left:1594.5px;top:47.5px;" width="27" height="27" viewBox="0 0 27 27"><circle cx="13.5" cy="13.5" r="13.5" fill="#f1f3f4"/><path d="M8.3 11.2 L9.6 6.6 Q13.5 5.4 17.4 6.6 L18.7 11.2 Z" fill="#202124"/><rect x="5.6" y="11.4" width="15.8" height="1.8" rx=".9" fill="#202124"/><circle cx="9.6" cy="17.6" r="2.9" fill="none" stroke="#202124" stroke-width="1.6"/><circle cx="17.4" cy="17.6" r="2.9" fill="none" stroke="#202124" stroke-width="1.6"/><path d="M12.4 17.2 Q13.5 16.4 14.6 17.2" stroke="#202124" stroke-width="1.3" fill="none"/></svg>
<span class="t" style="left:1631.5px;top:61.5px;font-size:15.5px;color:#f1f3f4;transform:translate(0,-50%);">无痕模式</span>
<div style="position:absolute;left:1710.0px;top:43.5px;width:85.0px;height:35.5px;background:#33292b;border-radius:18px;border:1.5px solid #a8585e;"></div>
<span class="t" style="left:1726.5px;top:61.5px;font-size:15.2px;color:#f07f7a;transform:translate(0,-50%);font-weight:500;">更新</span>
<div style="position:absolute;left:1776.3px;top:53.5px;width:3.2px;height:3.2px;background:#f28b82;border-radius:50%;"></div>
<div style="position:absolute;left:1776.3px;top:60.0px;width:3.2px;height:3.2px;background:#f28b82;border-radius:50%;"></div>
<div style="position:absolute;left:1776.3px;top:66.5px;width:3.2px;height:3.2px;background:#f28b82;border-radius:50%;"></div>
<svg style="position:absolute;left:9.5px;top:92.5px;" width="16" height="18" viewBox="0 0 16 18"><path d="M0.5 1 Q0.5 0 1.5 0 H13.6 Q14.4 0 14.4 1 V10.5 L15.6 12 V17 Q15.6 18 14.6 18 H1.5 Q0.5 18 0.5 17 Z" fill="#f8dd7a"/></svg>
<span class="t" style="left:37.5px;top:103.0px;font-size:15.1px;color:#f1f3f4;transform:translate(0,-50%);font-weight:500;">资料</span>
<svg style="position:absolute;left:90.0px;top:92.5px;" width="16" height="18" viewBox="0 0 16 18"><path d="M0.5 1 Q0.5 0 1.5 0 H13.6 Q14.4 0 14.4 1 V10.5 L15.6 12 V17 Q15.6 18 14.6 18 H1.5 Q0.5 18 0.5 17 Z" fill="#f8dd7a"/></svg>
<span class="t" style="left:118.5px;top:103.0px;font-size:15.1px;color:#f1f3f4;transform:translate(0,-50%);font-weight:500;">常用</span>
<div style="position:absolute;left:1682.5px;top:90.0px;width:1.0px;height:21.0px;background:#55575b;"></div>
<svg style="position:absolute;left:1698.5px;top:92.5px;" width="16" height="18" viewBox="0 0 16 18"><path d="M0.5 1 Q0.5 0 1.5 0 H13.6 Q14.4 0 14.4 1 V10.5 L15.6 12 V17 Q15.6 18 14.6 18 H1.5 Q0.5 18 0.5 17 Z" fill="#f8dd7a"/></svg>
<span class="t" style="left:1727.0px;top:103.0px;font-size:15.2px;color:#f1f3f4;transform:translate(0,-50%);font-weight:500;">其他书签</span>
</div>
</div>
</div>
</div>
</body>
</html>
